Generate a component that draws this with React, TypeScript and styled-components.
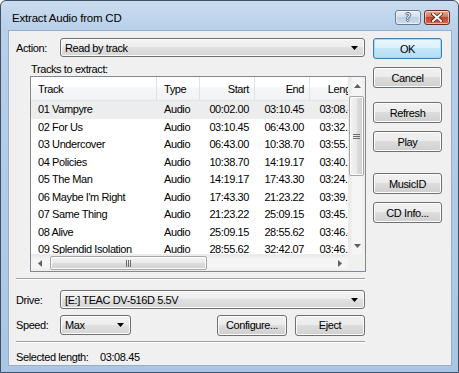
import React from 'react';
import styled, { createGlobalStyle } from 'styled-components';

const GlobalStyle = createGlobalStyle`
  html, body {
    margin: 0;
    padding: 0;
    background: #ffffff;
  }
  body {
    font-family: "Liberation Sans", Arial, sans-serif;
    font-size: 11px;
    letter-spacing: -0.4px;
    color: #000;
  }
`;

const tracks = [
  { name: '01 Vampyre', start: '00:02.00', end: '03:10.45', length: '03:08.45' },
  { name: '02 For Us', start: '03:10.45', end: '06:43.00', length: '03:32.30' },
  { name: '03 Undercover', start: '06:43.00', end: '10:38.70', length: '03:55.70' },
  { name: '04 Policies', start: '10:38.70', end: '14:19.17', length: '03:40.22' },
  { name: '05 The Man', start: '14:19.17', end: '17:43.30', length: '03:24.13' },
  { name: "06 Maybe I'm Right", start: '17:43.30', end: '21:23.22', length: '03:39.67' },
  { name: '07 Same Thing', start: '21:23.22', end: '25:09.15', length: '03:45.68' },
  { name: '08 Alive', start: '25:09.15', end: '28:55.62', length: '03:46.47' },
  { name: '09 Splendid Isolation', start: '28:55.62', end: '32:42.07', length: '03:46.20' },
];

const COLS = '126px 43px 55px 55px 55px';

const Window = styled.div`
  width: 459px;
  height: 373px;
  box-sizing: border-box;
  border: 1px solid #3f5064;
  border-radius: 6px 6px 0 0;
  background: linear-gradient(#cadcf0, #b7cfe9 30px, #aac6e4);
  display: flex;
  flex-direction: column;
  overflow: hidden;
`;

const TitleBar = styled.div`
  height: 29px;
  box-sizing: border-box;
  padding: 4px 8px 0 11px;
  display: flex;
  align-items: center;
`;

const TitleText = styled.div`
  flex: 1;
  font-size: 11.5px;
  letter-spacing: -0.2px;
`;

const CaptionButton = styled.div<{ $close?: boolean }>`
  width: 26px;
  height: 15px;
  box-sizing: border-box;
  margin-left: 3px;
  border: 1px solid ${({ $close }) => ($close ? '#6e2b24' : '#6a7b91')};
  border-radius: 3px;
  background: ${({ $close }) =>
    $close
      ? 'linear-gradient(#e8a898, #d27563 45%, #c0452f 50%, #d06a52)'
      : 'linear-gradient(#e6eef7, #d2e0ef 45%, #bccfe5 50%, #cddcee)'};
  box-shadow: inset 0 0 0 1px rgba(255, 255, 255, 0.55);
  display: flex;
  align-items: center;
  justify-content: center;
  color: #fff;
  font-family: "DejaVu Sans", sans-serif;
  font-size: 11px;
  letter-spacing: 0;
  text-shadow: 1px 0 0 #4a5a70, -1px 0 0 #4a5a70, 0 1px 0 #4a5a70, 0 -1px 0 #4a5a70;
`;

const Client = styled.div`
  flex: 1;
  margin: 0 6px 6px 7px;
  background: #f0f0f0;
  border: 1px solid #97aecb;
  box-sizing: border-box;
  padding: 6px 9px 0 7px;
  display: grid;
  grid-template-columns: 350px 69px;
  column-gap: 7px;
  align-items: start;
`;

const MainColumn = styled.div`
  display: flex;
  flex-direction: column;
`;

const FieldRow = styled.div<{ $mt?: number; $h?: number }>`
  display: flex;
  align-items: center;
  height: ${({ $h }) => $h ?? 19}px;
  margin-top: ${({ $mt }) => $mt ?? 0}px;
  margin-right: 1px;
`;

const FieldLabel = styled.div`
  width: 44px;
  flex: none;
`;

const Combo = styled.div<{ $w?: number }>`
  ${({ $w }) => ($w ? `width: ${$w}px;` : 'flex: 1;')}
  height: 100%;
  box-sizing: border-box;
  border: 1px solid #707070;
  border-radius: 3px;
  background: linear-gradient(#f4f4f4, #ececec 49%, #e0e0e0 50%, #d6d6d6);
  box-shadow: inset 0 0 0 1px #fbfbfb;
  display: flex;
  align-items: center;
  padding: 0 6px 0 4px;
`;

const ComboText = styled.span`
  flex: 1;
  white-space: nowrap;
`;

const SectionLabel = styled.div`
  margin: 6px 0 0 15px;
  height: 13px;
  line-height: 13px;
`;

const ListBox = styled.div`
  margin-left: 14px;
  height: 196px;
  box-sizing: border-box;
  border: 1px solid #828790;
  background: #fff;
  display: grid;
  grid-template-columns: 1fr 17px;
  grid-template-rows: 1fr 17px;
  overflow: hidden;
`;

const ListContent = styled.div`
  overflow: hidden;
  min-width: 0;
`;

const HeaderRow = styled.div`
  display: grid;
  grid-template-columns: ${COLS};
  height: 24px;
  background: linear-gradient(#ffffff, #ffffff 45%, #f6f7f8 46%, #f1f2f4);
  border-bottom: 1px solid #e3e4e6;
  box-sizing: border-box;
`;

const HeaderCell = styled.div<{ $right?: boolean }>`
  border-right: 1px solid #dfe1e4;
  box-sizing: border-box;
  display: flex;
  align-items: center;
  justify-content: ${({ $right }) => ($right ? 'flex-end' : 'flex-start')};
  padding: ${({ $right }) => ($right ? '0 5px 0 0' : '0 0 0 7px')};
  white-space: nowrap;
  overflow: hidden;
`;

const Row = styled.div<{ $hot?: boolean }>`
  display: grid;
  grid-template-columns: ${COLS};
  height: 17.5px;
  line-height: 17.5px;
  background: ${({ $hot }) => ($hot ? '#ededed' : 'transparent')};
`;

const Cell = styled.div<{ $right?: boolean }>`
  text-align: ${({ $right }) => ($right ? 'right' : 'left')};
  padding: ${({ $right }) => ($right ? '0 6px 0 0' : '0 0 0 7px')};
  white-space: nowrap;
  overflow: hidden;
`;

const VScroll = styled.div`
  display: flex;
  flex-direction: column;
  background: linear-gradient(to right, #e8e8e8, #f5f5f5 25%, #f5f5f5 75%, #ececec);
  border-left: 1px solid #ececec;
`;

const HScroll = styled.div`
  display: flex;
  align-items: stretch;
  background: linear-gradient(#e8e8e8, #f5f5f5 25%, #f5f5f5 75%, #ececec);
  border-top: 1px solid #ececec;
`;

const ScrollButton = styled.div`
  flex: none;
  width: 17px;
  height: 17px;
  display: flex;
  align-items: center;
  justify-content: center;
`;

const VThumb = styled.div`
  margin: 2px 1px 0 0;
  height: 78px;
  border: 1px solid #a6a6a6;
  border-radius: 2px;
  background: linear-gradient(to right, #f4f4f4, #e9e9e9 50%, #dcdcdc 51%, #d2d2d2);
  box-shadow: inset 0 0 0 1px #fcfcfc;
  display: flex;
  align-items: center;
  justify-content: center;
`;

const HThumb = styled.div`
  margin: 1px 0 1px 2px;
  width: 155px;
  border: 1px solid #a6a6a6;
  border-radius: 2px;
  background: linear-gradient(#f4f4f4, #e9e9e9 50%, #dcdcdc 51%, #d2d2d2);
  box-shadow: inset 0 0 0 1px #fcfcfc;
  display: flex;
  align-items: center;
  justify-content: center;
`;

const Spacer = styled.div`
  flex: 1;
`;

const Corner = styled.div`
  background: #f0f0f0;
`;

const Separator = styled.div<{ $mt: number }>`
  margin-top: ${({ $mt }) => $mt}px;
  margin-right: 1px;
  border-top: 1px solid #a0a0a0;
  border-bottom: 1px solid #ffffff;
`;

const Button = styled.div<{ $mt?: number; $ml?: number; $w?: number; $default?: boolean }>`
  width: ${({ $w }) => ($w ? `${$w}px` : '100%')};
  height: 21px;
  margin-top: ${({ $mt }) => $mt ?? 0}px;
  margin-left: ${({ $ml }) => $ml ?? 0}px;
  box-sizing: border-box;
  border: 1px solid ${({ $default }) => ($default ? '#3c7fb1' : '#707070')};
  border-radius: 3px;
  background: ${({ $default }) =>
    $default
      ? 'linear-gradient(#eaf6fd, #dcf0fb 49%, #c4e6f8 50%, #b3ddf4)'
      : 'linear-gradient(#f2f2f2, #ebebeb 49%, #dddddd 50%, #cfcfcf)'};
  box-shadow: inset 0 0 0 1px ${({ $default }) => ($default ? '#9edcf7' : '#fcfcfc')};
  display: flex;
  align-items: center;
  justify-content: center;
  flex: none;
`;

const ButtonColumn = styled.div`
  display: flex;
  flex-direction: column;
  padding-top: 1px;
`;

const StatusLine = styled.div`
  margin-top: 8px;
  height: 12px;
  line-height: 12px;
  display: flex;
`;

const StatusLabel = styled.span`
  width: 84px;
`;

const Arrow = ({ dir, color = '#606060' }: { dir: 'up' | 'down' | 'left' | 'right'; color?: string }) => {
  const pts = {
    up: '0,4 7,4 3.5,0',
    down: '0,0 7,0 3.5,4',
    left: '4,0 4,7 0,3.5',
    right: '0,0 0,7 4,3.5',
  }[dir];
  const vertical = dir === 'up' || dir === 'down';
  return (
    <svg width={vertical ? 7 : 4} height={vertical ? 4 : 7} viewBox={vertical ? '0 0 7 4' : '0 0 4 7'}>
      <polygon points={pts} fill={color} />
    </svg>
  );
};

const Gripper = ({ vertical }: { vertical?: boolean }) =>
  vertical ? (
    <svg width="7" height="7" viewBox="0 0 7 7">
      {[0, 2, 4].map((y) => (
        <rect key={y} x="0" y={y + 1} width="7" height="1" fill="#6b6b6b" />
      ))}
    </svg>
  ) : (
    <svg width="7" height="7" viewBox="0 0 7 7">
      {[0, 2, 4].map((x) => (
        <rect key={x} x={x + 1} y="0" width="1" height="7" fill="#6b6b6b" />
      ))}
    </svg>
  );

const CloseGlyph = () => (
  <svg width="12" height="9" viewBox="0 0 12 9">
    <path d="M2 1 L10 8 M10 1 L2 8" stroke="#5a2019" strokeWidth="3.6" strokeLinecap="square" />
    <path d="M2 1 L10 8 M10 1 L2 8" stroke="#ffffff" strokeWidth="2" strokeLinecap="square" />
  </svg>
);

export default function App() {
  return (
    <>
      <GlobalStyle />
      <Window>
        <TitleBar>
          <TitleText>Extract Audio from CD</TitleText>
          <CaptionButton>?</CaptionButton>
          <CaptionButton $close>
            <CloseGlyph />
          </CaptionButton>
        </TitleBar>
        <Client>
          <MainColumn>
            <FieldRow $mt={1}>
              <FieldLabel>Action:</FieldLabel>
              <Combo>
                <ComboText>Read by track</ComboText>
                <Arrow dir="down" color="#000" />
              </Combo>
            </FieldRow>
            <SectionLabel>Tracks to extract:</SectionLabel>
            <ListBox>
              <ListContent>
                <HeaderRow>
                  <HeaderCell>Track</HeaderCell>
                  <HeaderCell>Type</HeaderCell>
                  <HeaderCell $right>Start</HeaderCell>
                  <HeaderCell $right>End</HeaderCell>
                  <HeaderCell $right>Length</HeaderCell>
                </HeaderRow>
                {tracks.map((t, i) => (
                  <Row key={t.name} $hot={i === 0}>
                    <Cell>{t.name}</Cell>
                    <Cell>Audio</Cell>
                    <Cell $right>{t.start}</Cell>
                    <Cell $right>{t.end}</Cell>
                    <Cell $right>{t.length}</Cell>
                  </Row>
                ))}
              </ListContent>
              <VScroll>
                <ScrollButton>
                  <Arrow dir="up" />
                </ScrollButton>
                <VThumb>
                  <Gripper vertical />
                </VThumb>
                <Spacer />
                <ScrollButton>
                  <Arrow dir="down" />
                </ScrollButton>
              </VScroll>
              <HScroll>
                <ScrollButton>
                  <Arrow dir="left" />
                </ScrollButton>
                <HThumb>
                  <Gripper />
                </HThumb>
                <Spacer />
                <ScrollButton>
                  <Arrow dir="right" />
                </ScrollButton>
              </HScroll>
              <Corner />
            </ListBox>
            <Separator $mt={6} />
            <FieldRow $mt={10}>
              <FieldLabel>Drive:</FieldLabel>
              <Combo>
                <ComboText>[E:] TEAC DV-516D 5.5V</ComboText>
                <Arrow dir="down" color="#000" />
              </Combo>
            </FieldRow>
            <FieldRow $mt={6} $h={20}>
              <FieldLabel>Speed:</FieldLabel>
              <Combo $w={71}>
                <ComboText>Max</ComboText>
                <Arrow dir="down" color="#000" />
              </Combo>
              <Spacer />
              <Button $w={70}>Configure...</Button>
              <Button $w={70} $ml={8}>
                Eject
              </Button>
            </FieldRow>
            <Separator $mt={6} />
            <StatusLine>
              <StatusLabel>Selected length:</StatusLabel>
              <span>03:08.45</span>
            </StatusLine>
          </MainColumn>
          <ButtonColumn>
            <Button $default>OK</Button>
            <Button $mt={8}>Cancel</Button>
            <Button $mt={14}>Refresh</Button>
            <Button $mt={8}>Play</Button>
            <Button $mt={21}>MusicID</Button>
            <Button $mt={8}>CD Info...</Button>
          </ButtonColumn>
        </Client>
      </Window>
    </>
  );
}
